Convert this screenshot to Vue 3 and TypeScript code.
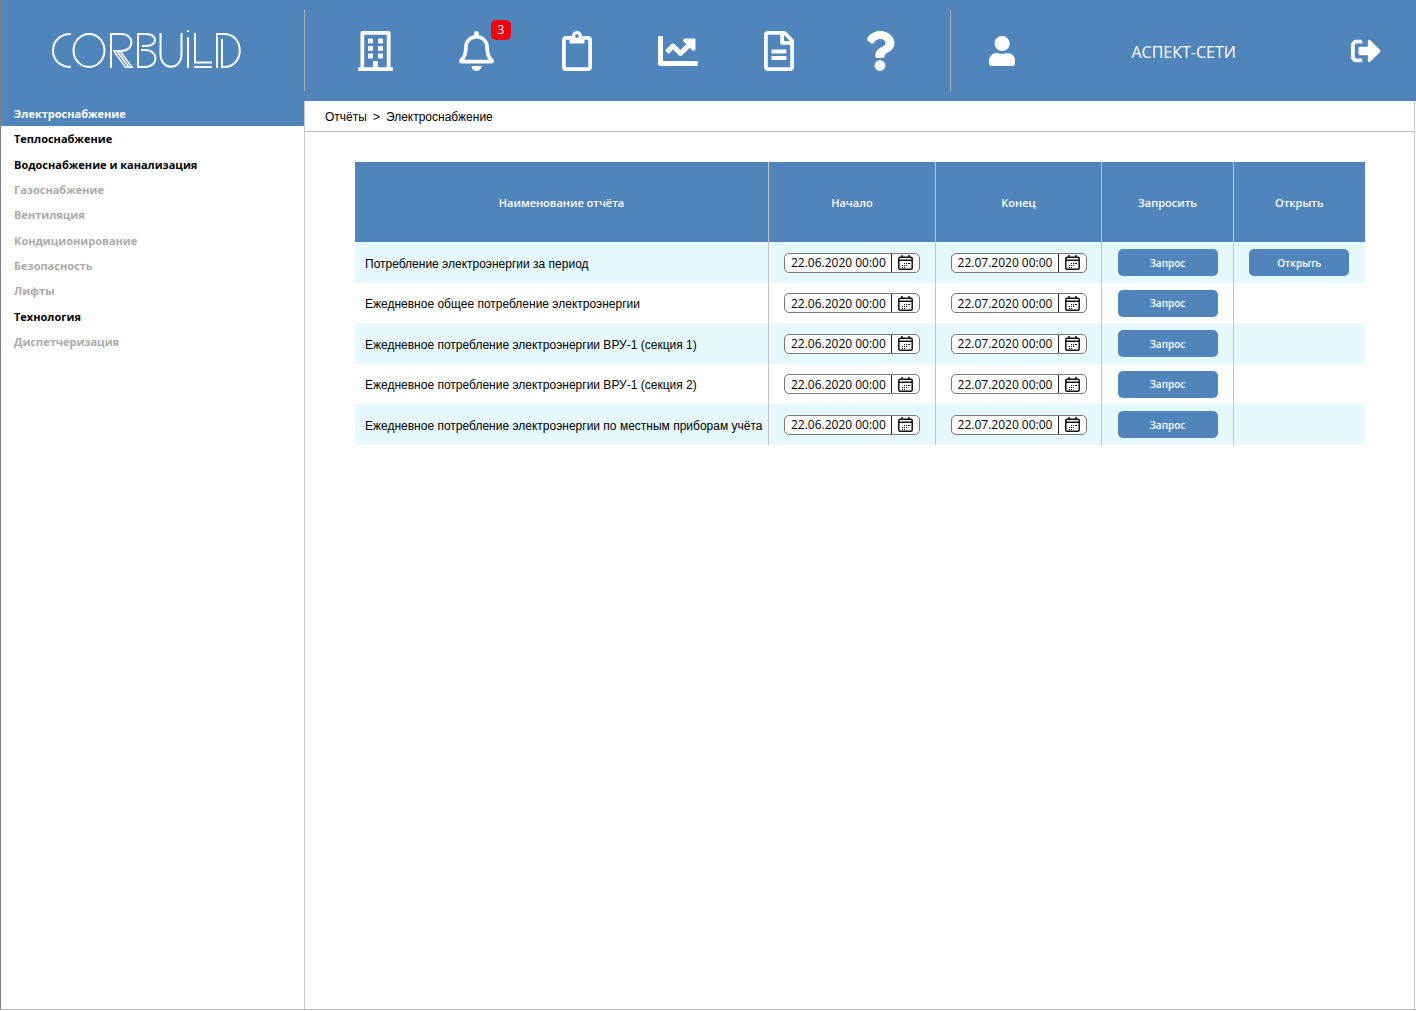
<script setup lang="ts">
import { ref } from 'vue'

interface NavIcon {
  label: string
  width: number
  path: string
  badge?: number
}

interface Report {
  name: string
  start: string
  end: string
  ready: boolean
}

const nav: NavIcon[] = [
  {
    label: 'Объекты',
    width: 448,
    path: 'M128 148v-40c0-6.6 5.4-12 12-12h40c6.6 0 12 5.4 12 12v40c0 6.6-5.4 12-12 12h-40c-6.6 0-12-5.4-12-12zm140 12h40c6.6 0 12-5.4 12-12v-40c0-6.6-5.4-12-12-12h-40c-6.6 0-12 5.4-12 12v40c0 6.6 5.4 12 12 12zm-128 96h40c6.6 0 12-5.4 12-12v-40c0-6.6-5.4-12-12-12h-40c-6.6 0-12 5.4-12 12v40c0 6.6 5.4 12 12 12zm128 0h40c6.6 0 12-5.4 12-12v-40c0-6.6-5.4-12-12-12h-40c-6.6 0-12 5.4-12 12v40c0 6.6 5.4 12 12 12zm-76 84v-40c0-6.6-5.4-12-12-12h-40c-6.6 0-12 5.4-12 12v40c0 6.6 5.4 12 12 12h40c6.6 0 12-5.4 12-12zm76 12h40c6.6 0 12-5.4 12-12v-40c0-6.6-5.4-12-12-12h-40c-6.6 0-12 5.4-12 12v40c0 6.6 5.4 12 12 12zm180 124v36H0v-36c0-6.6 5.4-12 12-12h19.5V24c0-13.3 10.7-24 24-24h337c13.3 0 24 10.7 24 24v440H436c6.6 0 12 5.4 12 12zM79.5 463H192v-67c0-6.6 5.4-12 12-12h40c6.6 0 12 5.4 12 12v67h112.5V49L80 48l-.5 415z',
  },
  {
    label: 'Уведомления',
    width: 448,
    badge: 3,
    path: 'M439.39 362.29c-19.32-20.76-55.47-51.99-55.47-154.29 0-77.7-54.48-139.9-127.94-155.16V32c0-17.67-14.32-32-31.98-32s-31.98 14.33-31.98 32v20.84C118.56 68.1 64.08 130.3 64.08 208c0 102.3-36.15 133.53-55.47 154.29-6 6.45-8.66 14.16-8.61 21.71.11 16.4 12.98 32 32.1 32h383.8c19.12 0 32-15.6 32.1-32 .05-7.55-2.61-15.27-8.61-21.71zM67.53 368c21.22-27.97 44.42-74.33 44.53-159.42 0-.2-.06-.38-.06-.58 0-61.86 50.14-112 112-112s112 50.14 112 112c0 .2-.06.38-.06.58.11 85.1 23.31 131.46 44.53 159.42H67.53zM224 512c35.32 0 63.97-28.65 63.97-64H160.03c0 35.35 28.65 64 63.97 64z',
  },
  {
    label: 'Журнал',
    width: 384,
    path: 'M336 64h-80c0-35.3-28.7-64-64-64s-64 28.7-64 64H48C21.5 64 0 85.5 0 112v352c0 26.5 21.5 48 48 48h288c26.5 0 48-21.5 48-48V112c0-26.5-21.5-48-48-48zM192 40c13.3 0 24 10.7 24 24s-10.7 24-24 24-24-10.7-24-24 10.7-24 24-24zm144 418c0 3.3-2.7 6-6 6H54c-3.3 0-6-2.7-6-6V118c0-3.3 2.7-6 6-6h42v36c0 6.6 5.4 12 12 12h168c6.6 0 12-5.4 12-12v-36h42c3.3 0 6 2.7 6 6z',
  },
  {
    label: 'Графики',
    width: 512,
    path: 'M496 384H64V80c0-8.84-7.16-16-16-16H16C7.16 64 0 71.16 0 80v336c0 17.67 14.33 32 32 32h464c8.84 0 16-7.16 16-16v-32c0-8.84-7.16-16-16-16zM464 96H345.94c-21.38 0-32.09 25.85-16.97 40.97l32.4 32.4L288 242.75l-73.37-73.37c-12.5-12.5-32.76-12.5-45.25 0l-68.69 68.69c-6.25 6.25-6.25 16.38 0 22.63l22.62 22.62c6.25 6.25 16.38 6.25 22.63 0L192 237.25l73.37 73.37c12.5 12.5 32.76 12.5 45.25 0l96-96 32.4 32.4c15.12 15.12 40.97 4.41 40.97-16.97V112c.01-8.84-7.15-16-15.99-16z',
  },
  {
    label: 'Отчёты',
    width: 384,
    path: 'M288 248v28c0 6.6-5.4 12-12 12H108c-6.6 0-12-5.4-12-12v-28c0-6.6 5.4-12 12-12h168c6.6 0 12 5.4 12 12zm-12 72H108c-6.6 0-12 5.4-12 12v28c0 6.6 5.4 12 12 12h168c6.6 0 12-5.4 12-12v-28c0-6.6-5.4-12-12-12zm108-188.1V464c0 26.5-21.5 48-48 48H48c-26.5 0-48-21.5-48-48V48C0 21.5 21.5 0 48 0h204.1C264.8 0 277 5.1 286 14.1L369.9 98c9 8.9 14.1 21.2 14.1 33.9zm-128-80V128h76.1L256 51.9zM336 464V176H232c-13.3 0-24-10.7-24-24V48H48v416h288z',
  },
  {
    label: 'Справка',
    width: 384,
    path: 'M202.021 0C122.202 0 70.503 32.703 29.914 91.026c-7.363 10.58-5.093 25.086 5.178 32.874l43.138 32.709c10.373 7.865 25.132 6.026 33.253-4.148 25.049-31.381 43.63-49.449 82.757-49.449 30.764 0 68.816 19.799 68.816 49.631 0 22.552-18.617 34.134-48.993 51.164-35.423 19.86-82.299 44.576-82.299 106.405V320c0 13.255 10.745 24 24 24h72.471c13.255 0 24-10.745 24-24v-5.773c0-42.86 125.268-44.645 125.268-160.627C377.504 66.256 286.902 0 202.021 0zM192 373.459c-38.196 0-69.271 31.075-69.271 69.271 0 38.195 31.075 69.27 69.271 69.27s69.271-31.075 69.271-69.271-31.075-69.27-69.271-69.27z',
  },
]

const sections = [
  { title: 'Электроснабжение', enabled: true },
  { title: 'Теплоснабжение', enabled: true },
  { title: 'Водоснабжение и канализация', enabled: true },
  { title: 'Газоснабжение', enabled: false },
  { title: 'Вентиляция', enabled: false },
  { title: 'Кондиционирование', enabled: false },
  { title: 'Безопасность', enabled: false },
  { title: 'Лифты', enabled: false },
  { title: 'Технология', enabled: true },
  { title: 'Диспетчеризация', enabled: false },
]

const active = ref('Электроснабжение')

const start = '22.06.2020 00:00'
const end = '22.07.2020 00:00'
const reports = ref<Report[]>([
  { name: 'Потребление электроэнергии за период', start, end, ready: true },
  { name: 'Ежедневное общее потребление электроэнергии', start, end, ready: false },
  { name: 'Ежедневное потребление электроэнергии ВРУ-1 (секция 1)', start, end, ready: false },
  { name: 'Ежедневное потребление электроэнергии ВРУ-1 (секция 2)', start, end, ready: false },
  { name: 'Ежедневное потребление электроэнергии по местным приборам учёта', start, end, ready: false },
])

const dateFields = [
  { key: 'start', label: 'Начало' },
  { key: 'end', label: 'Конец' },
] as const

function select(title: string, enabled: boolean) {
  if (enabled) active.value = title
}
</script>

<template>
  <div class="shell">
    <header class="top">
      <a class="logo" href="#" aria-label="Corbuild">
        <svg width="190" height="41" viewBox="0 1 190 41" fill="none" stroke="#fff" stroke-width="2">
          <path d="M20 5C9 5 2 12 2 21.500S9 38 20 38" />
          <ellipse cx="38" cy="21.500" rx="15.500" ry="16.500" />
          <path d="M60 39V5H70C84 5 84 22 70 22H62" />
          <path stroke-width="1.500" d="M63 22L74.500 38.300H81L69 22M66 22L78 38.300" />
          <path d="M87 5H95C107 5 107 17 95 17H91M87 4V38H94C108 38 108 21 94 21H90" />
          <path d="M109.500 4V25C109.500 42 130.500 42 130.500 25V4" />
          <path d="M137 8V39M137 1V3M144 4V33.500H161M143 38H161" />
          <path d="M166 39V5H173C194 5 194 38 173 38H171V10" />
        </svg>
      </a>
      <nav class="nav">
        <a v-for="item in nav" :key="item.label" href="#" :aria-label="item.label">
          <span class="glyph">
            <svg height="40" :viewBox="`0 0 ${item.width} 512`"><path :d="item.path" /></svg>
            <span v-if="item.badge" class="badge">{{ item.badge }}</span>
          </span>
        </a>
      </nav>
      <a class="user" href="#" aria-label="Профиль">
        <svg height="30" viewBox="0 0 448 512">
          <path d="M224 256c70.7 0 128-57.3 128-128S294.700 0 224 0 96 57.300 96 128s57.300 128 128 128zm89.600 32h-16.700c-22.200 10.200-46.900 16-72.900 16s-50.600-5.800-72.900-16h-16.700C60.200 288 0 348.200 0 422.400V464c0 26.500 21.500 48 48 48h352c26.500 0 48-21.500 48-48v-41.600c0-74.200-60.200-134.400-134.400-134.400z" />
        </svg>
      </a>
      <span class="company">АСПЕКТ-СЕТИ</span>
      <button class="exit" type="button" aria-label="Выход">
        <svg height="30" viewBox="0 0 512 512">
          <path d="M497 273L329 441c-15 15-41 4.500-41-17v-96H152c-13.300 0-24-10.700-24-24v-96c0-13.300 10.700-24 24-24h136V88c0-21.400 25.900-32 41-17l168 168c9.300 9.400 9.300 24.600 0 34zM192 436v-40c0-6.600-5.400-12-12-12H96c-17.700 0-32-14.300-32-32V160c0-17.700 14.300-32 32-32h84c6.600 0 12-5.400 12-12V76c0-6.600-5.400-12-12-12H96c-53 0-96 43-96 96v192c0 53 43 96 96 96h84c6.600 0 12-5.400 12-12z" />
        </svg>
      </button>
    </header>

    <div class="body">
      <aside class="side">
        <ul>
          <li v-for="s in sections" :key="s.title">
            <a
              href="#"
              :class="{ active: s.title === active, off: !s.enabled }"
              :aria-disabled="!s.enabled"
              @click.prevent="select(s.title, s.enabled)"
            >{{ s.title }}</a>
          </li>
        </ul>
      </aside>

      <main class="main">
        <div class="crumbs">
          <a href="#">Отчёты</a><span>&gt;</span><span>{{ active }}</span>
        </div>
        <div class="content">
          <table>
            <colgroup>
              <col class="c-name" />
              <col class="c-date" />
              <col class="c-date" />
              <col class="c-act" />
              <col class="c-act" />
            </colgroup>
            <thead>
              <tr>
                <th>Наименование отчёта</th>
                <th>Начало</th>
                <th>Конец</th>
                <th>Запросить</th>
                <th>Открыть</th>
              </tr>
            </thead>
            <tbody>
              <tr v-for="r in reports" :key="r.name">
                <td class="name">{{ r.name }}</td>
                <td v-for="f in dateFields" :key="f.key">
                  <div class="date">
                    <input v-model="r[f.key]" type="text" :aria-label="`${f.label}: ${r.name}`" />
                    <button type="button" aria-label="Календарь">
                      <svg width="15" height="15" viewBox="0 0 15 15">
                        <path fill="none" stroke="#111" stroke-width="1.500" d="M2 2.200H13Q14.200 2.200 14.200 3.400V13Q14.200 14.200 13 14.200H2Q.8 14.200 .8 13V3.400Q.8 2.200 2 2.200ZM1 5.200H14M4 0V3M11 0V3" />
                        <path fill="#111" d="M6 8h1v1H6zM8 8h1v1H8zM10 8h2v1H10zM4 10h1v1H4zM6 10h1v1H6zM8 10h1v1H8zM4 12h1v1H4zM6 12h1v1H6z" />
                      </svg>
                    </button>
                  </div>
                </td>
                <td><button class="act" type="button">Запрос</button></td>
                <td><button v-if="r.ready" class="act" type="button">Открыть</button></td>
              </tr>
            </tbody>
          </table>
        </div>
      </main>
    </div>
  </div>
</template>

<style>
body {
  margin: 0;
  background: #fff;
}
</style>

<style scoped>
* {
  box-sizing: border-box;
}

.shell {
  display: flex;
  flex-direction: column;
  min-height: calc(100vh - 1px);
  border-left: 1px solid #808080;
  border-bottom: 1px solid #b8b8b8;
  font: 12px/16px 'Open Sans', 'Noto Sans', sans-serif;
  color: #000;
}

a {
  color: inherit;
  text-decoration: none;
}

button {
  padding: 0;
  border: 0;
  background: none;
  font-family: inherit;
  cursor: pointer;
}

svg {
  display: block;
}

.top {
  display: grid;
  grid-template-columns: 304px 64fr 10fr 26fr 10fr;
  height: 101px;
  padding: 10px 0;
  background: #5085bb;
  color: #fff;
}

.top svg {
  fill: #fff;
}

.top .logo svg {
  fill: none;
}

.logo,
.nav a,
.user,
.company,
.exit {
  display: flex;
  align-items: center;
  justify-content: center;
}

.logo {
  padding-right: 13px;
  border-right: 1px solid #a8adb3;
}

.nav {
  display: flex;
  padding: 0 20px;
  border-right: 1px solid #a8adb3;
}

.nav a {
  flex: 1;
}

.glyph {
  position: relative;
}

.badge {
  position: absolute;
  top: -11px;
  left: 32px;
  width: 20px;
  border-radius: 5px;
  background: #f2000d;
  font-size: 12px;
  line-height: 20px;
  text-align: center;
}

.company {
  padding-top: 2px;
  font-size: 16px;
  line-height: 20px;
}

.body {
  display: flex;
  flex: 1;
}

.side {
  flex: 0 0 304px;
  border-right: 1px solid #c8c8c8;
}

.side ul {
  display: grid;
  grid-auto-rows: 1fr;
  height: 253px;
  margin: 0;
  padding: 0;
  list-style: none;
}

.side a {
  display: flex;
  align-items: center;
  height: 100%;
  padding: 1px 0 0 13px;
  font-size: 11px;
  font-weight: 700;
}

.side .off {
  color: #aaa;
}

.side .active {
  background: #5085bb;
  color: #fff;
}

.main {
  flex: 1;
  min-width: 0;
  margin-right: 1px;
  border-right: 1px solid #c8c8c8;
}

.crumbs,
td.name {
  font-family: 'Liberation Sans', Arial, sans-serif;
}

.crumbs {
  display: flex;
  align-items: center;
  gap: 6px;
  height: 31px;
  padding: 2px 0 0 20px;
  border-bottom: 1px solid #c0c0c0;
}

.content {
  padding: 30px 49px 30px 50px;
}

table {
  width: 100%;
  table-layout: fixed;
  border-collapse: separate;
  border-spacing: 0;
}

.c-name {
  width: 41%;
}

.c-date {
  width: 16.5%;
}

.c-act {
  width: 13%;
}

th,
td {
  padding: 0;
  border-right: 1px solid #c4c4c4;
  text-align: center;
  vertical-align: middle;
}

th:last-child,
td:last-child {
  border-right: 0;
}

th {
  height: 80px;
  padding-top: 2px;
  background: #5085bb;
  color: #fff;
  font-size: 11px;
  font-weight: 600;
}

td {
  height: 40px;
}

tbody tr:nth-child(odd) td {
  height: 41px;
  background: #e5f9ff;
}

td.name {
  padding: 2px 0 0 10px;
  text-align: left;
  white-space: nowrap;
}

.date {
  display: flex;
  width: 136px;
  height: 20px;
  margin: 0 auto;
  overflow: hidden;
  border: 1px solid #77777f;
  border-radius: 5px;
  background: #fff;
}

.date input {
  flex: 1;
  min-width: 0;
  padding: 1px 0 0 6px;
  border: 0;
  background: none;
  color: #000;
  font: inherit;
  outline: 0;
}

.date button {
  display: flex;
  align-items: center;
  justify-content: center;
  width: 28px;
  border-left: 1px solid #222;
}

.act {
  display: block;
  width: 100px;
  height: 27px;
  margin: 0 auto;
  border-radius: 5px;
  background: #5085bb;
  color: #fff;
  font-size: 10px;
  font-weight: 600;
}
</style>
